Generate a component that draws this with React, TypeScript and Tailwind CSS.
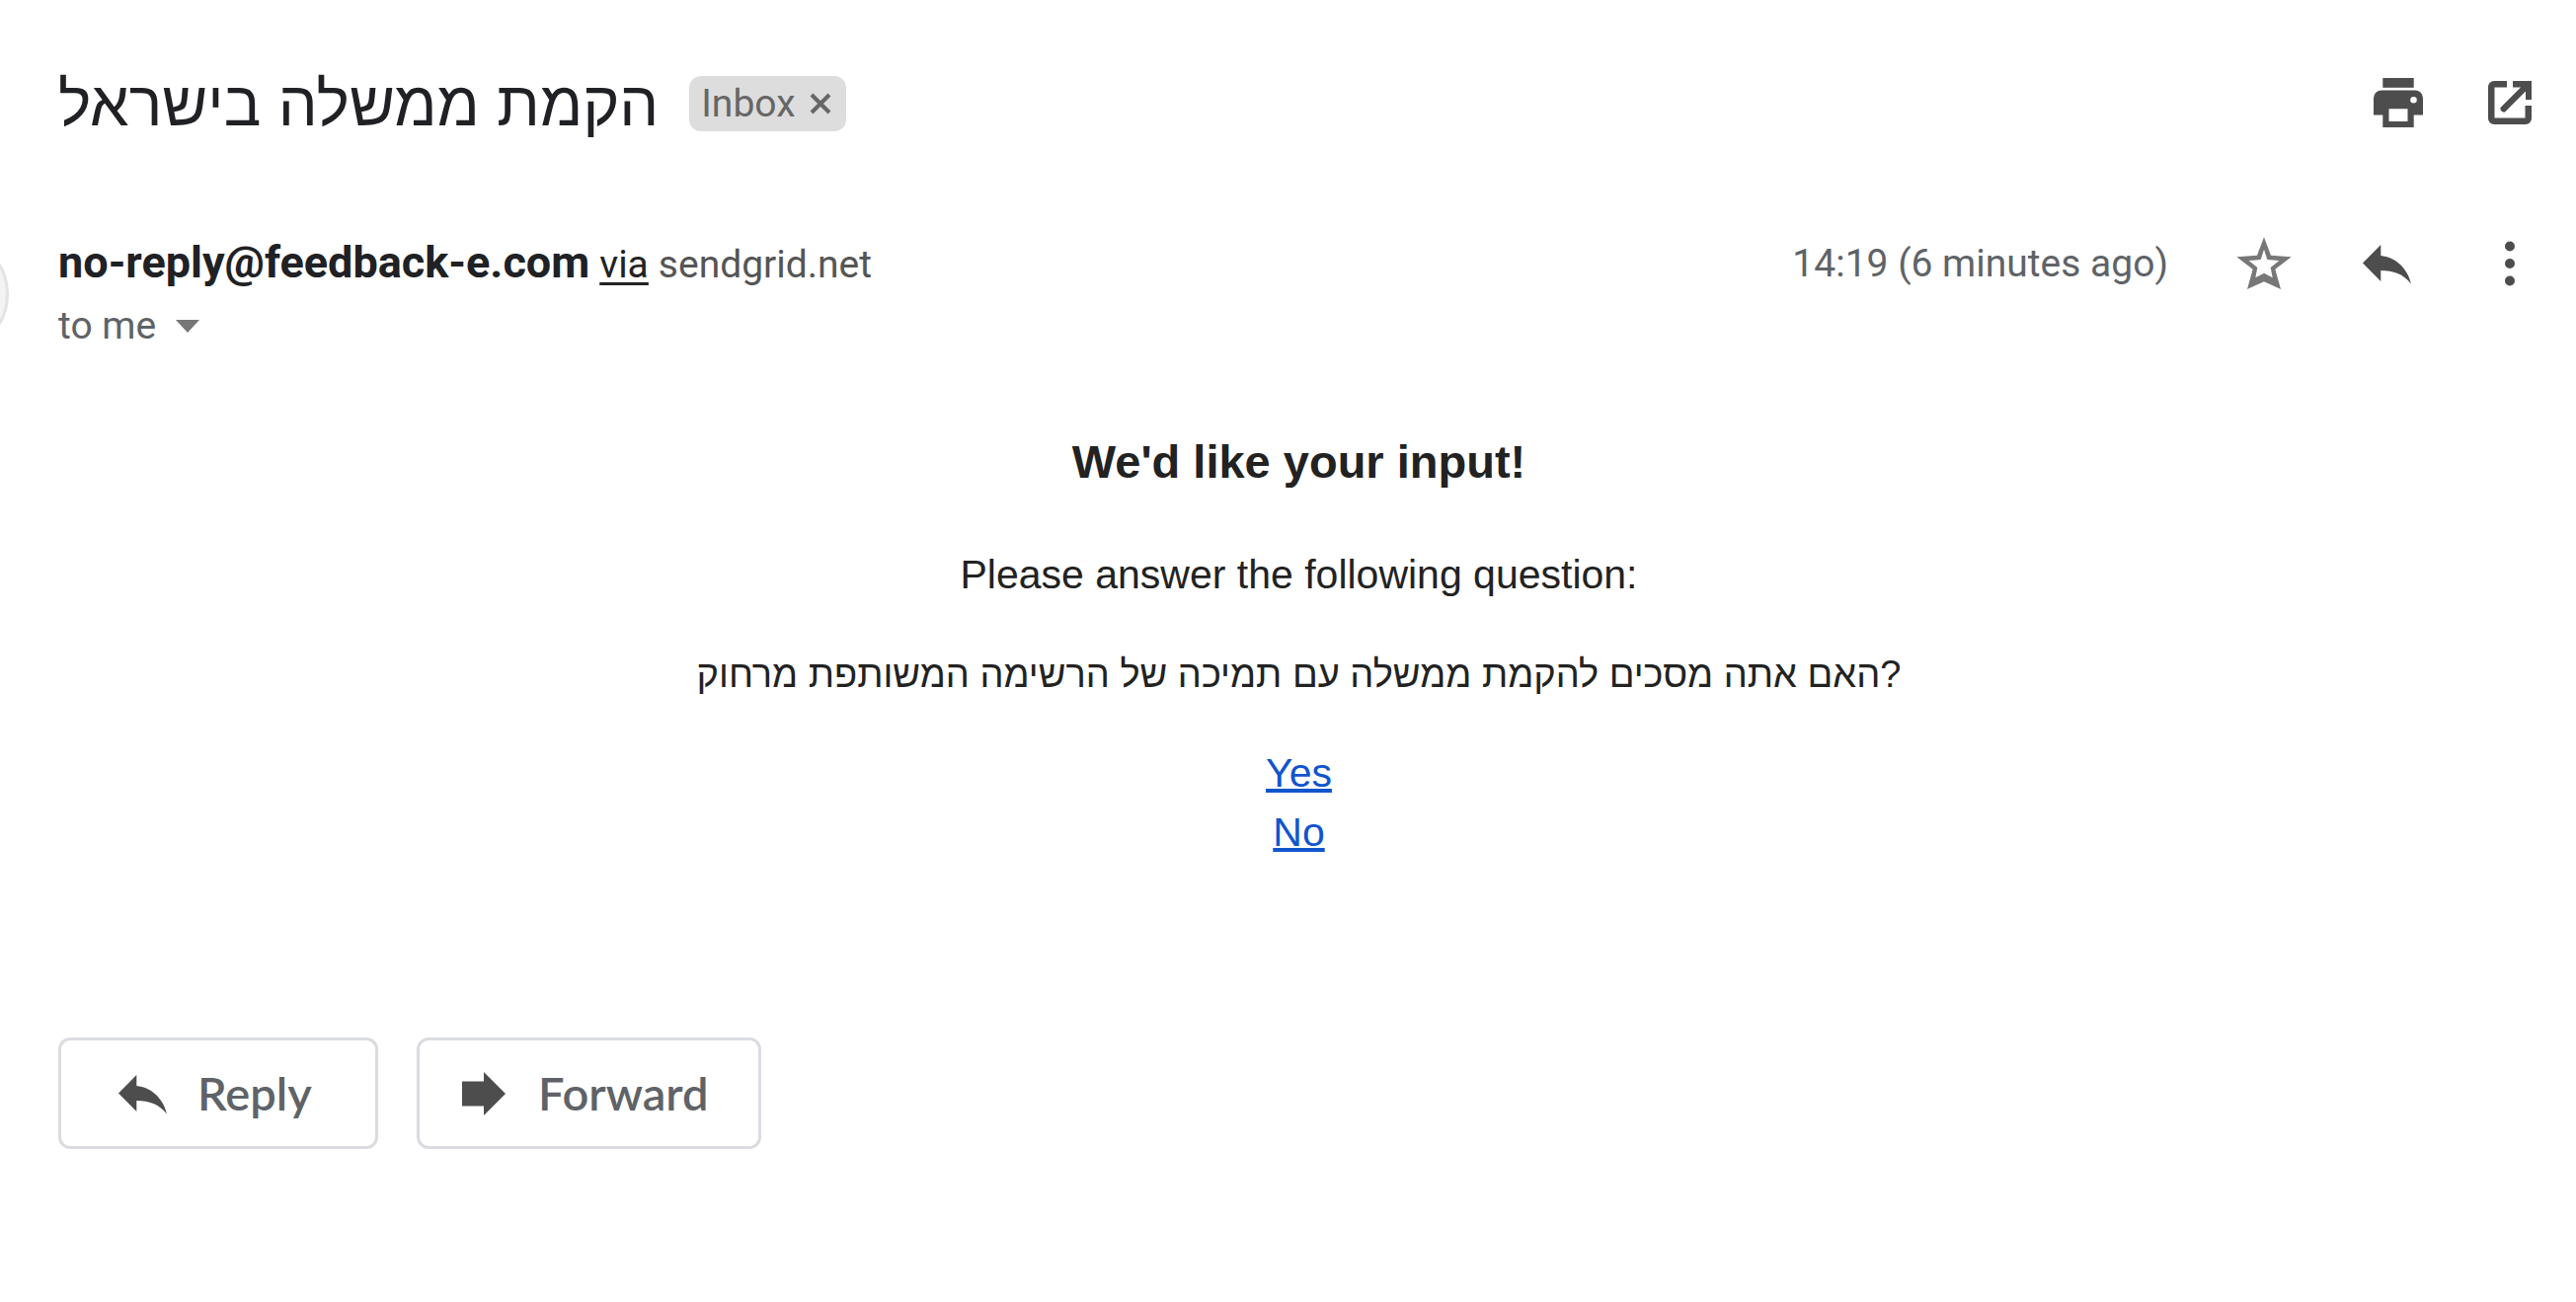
import React from "react";

const iconColor = "text-[#4d4d4d]";

function PrintIcon() {
  return (
    <svg viewBox="0 0 60 60" className="size-[60px]" fill="currentColor" aria-hidden="true">
      <path d="M14.300 4h31.400v9.800H14.300z" />
      <path
        fillRule="evenodd"
        d="M13 16.500h34a8 8 0 0 1 8 8V41.500h-9.300V54H14.300V41.500H5V24.500a8 8 0 0 1 8-8zM20.500 35.300V48h19V35.300zM45.500 23a3.300 3.300 0 1 0 0 6.600 3.300 3.300 0 1 0 0-6.600z"
      />
    </svg>
  );
}

function OpenIcon() {
  return (
    <svg viewBox="0 0 60 60" className="size-[60px]" fill="currentColor" aria-hidden="true">
      <path d="M14 7h13v6.500H14.500v31h31V32H52v13a6 6 0 0 1-6 6H14a6 6 0 0 1-6-6V13a6 6 0 0 1 6-6z" />
      <path d="M33 7h19v19h-6V17.500L25 38.500q-2 .5-3.500-1t-1-3.500L41 13.500h-8z" />
    </svg>
  );
}

function ReplyIcon() {
  return (
    <svg viewBox="0 0 60 60" className="size-[60px]" fill="currentColor" aria-hidden="true">
      <path d="M5 29.500L23.300 11v11C38 23.500 50 34 54 50.500 46 40.500 36 37 23.300 37v11z" />
    </svg>
  );
}

function ForwardIcon() {
  return (
    <svg viewBox="0 0 60 60" className="size-[60px]" fill="currentColor" aria-hidden="true">
      <path d="M8 17.500H30V8L52 30 30 52V42.500H8z" />
    </svg>
  );
}

function StarIcon() {
  return (
    <svg viewBox="39 33 180 180" className="size-[60px]" fill="currentColor" fillRule="evenodd" aria-hidden="true">
      <path d="M126 43L147 98 209 103 160 140 177 201 126 178 75 201 92 140 43 103 105 98zM126 80L116 111 80 114 106 135 100 166 126 152 152 166 146 135 172 114 136 111z" />
    </svg>
  );
}

function MoreIcon() {
  return (
    <svg viewBox="0 0 60 60" className="size-[60px]" fill="currentColor" aria-hidden="true">
      <circle cx="30" cy="12.500" r="5" />
      <circle cx="30" cy="30" r="5" />
      <circle cx="30" cy="47.500" r="5" />
    </svg>
  );
}

export default function App() {
  return (
    <main className="relative min-h-screen overflow-hidden bg-white pt-[60px] pr-[37px] pb-[150px] pl-[59px] font-['Roboto','Liberation_Sans',sans-serif] text-[#5f6368]">
      <div className="absolute top-[238px] -left-[111px] size-[120px] rounded-full border-[3px] border-[#e3e3e3] bg-[#f3f3f3]" />

      <header className="flex h-[90px] items-center justify-between">
        <div className="flex items-center gap-[31px]">
          <h1 className="font-['Liberation_Sans',sans-serif] text-[63px] leading-[90px] text-[#202124]">הקמת ממשלה בישראל</h1>
          <div className="flex h-[56px] items-center gap-[14px] rounded-[12px] bg-[#dddddd] pr-[15px] pl-[12px] text-[39px] text-[#666666]">
            <span>Inbox</span>
            <button type="button" aria-label="Remove label Inbox">
              <svg viewBox="0 0 22 22" className="size-[22px]" fill="none" stroke="currentColor" strokeWidth="4" aria-hidden="true">
                <path d="M2 2l18 18M20 2L2 20" />
              </svg>
            </button>
          </div>
        </div>
        <div className={`flex items-center gap-[53px] ${iconColor}`}>
          <button type="button" aria-label="Print"><PrintIcon /></button>
          <button type="button" aria-label="Open in new window"><OpenIcon /></button>
        </div>
      </header>

      <section className="mt-[84px] flex items-start justify-between">
        <div>
          <div className="flex h-[66px] items-baseline gap-[10px] text-[39px] leading-[64px]">
            <h2 className="text-[45px] font-bold text-[#202124]">no-reply@feedback-e.com</h2>
            <a href="#via" className="text-[#222222] underline decoration-[3px] underline-offset-[5px]">via</a>
            <span className="text-[#555555]">sendgrid.net</span>
          </div>
          <button type="button" className="flex h-[60px] items-center gap-[20px] text-[39px]">
            <span>to me</span>
            <svg viewBox="0 0 24 13" className="h-[13px] w-[24px]" fill="#777777" aria-hidden="true">
              <path d="M0 0h24L12 13z" />
            </svg>
          </button>
        </div>
        <div className={`flex h-[66px] items-center gap-[64px] ${iconColor}`}>
          <time className="mr-1 text-[39px] text-[#5f6368]">14:19 (6 minutes ago)</time>
          <button type="button" aria-label="Star" className="text-[#777777]"><StarIcon /></button>
          <button type="button" aria-label="Reply"><ReplyIcon /></button>
          <button type="button" aria-label="More"><MoreIcon /></button>
        </div>
      </section>

      <article className="mt-[78px] flex flex-col items-center text-center font-['Liberation_Sans',sans-serif] text-[41px] leading-[60px] text-[#222222]">
        <h3 className="text-[47px] font-bold">We'd like your input!</h3>
        <p className="mt-[54px]">Please answer the following question:</p>
        <p className="mt-[41px] text-[38px]" dir="ltr">האם אתה מסכים להקמת ממשלה עם תמיכה של הרשימה המשותפת מרחוק?</p>
        <a href="#yes" className="mt-[40px] text-[#1155cc] underline decoration-[4px]">Yes</a>
        <a href="#no" className="text-[#1155cc] underline decoration-[4px]">No</a>
      </article>

      <footer className="mt-[178px] flex gap-[39px] font-['Lato','Roboto',sans-serif] text-[47px] font-semibold">
        <button type="button" className="flex h-[113px] w-[324px] items-center gap-[25px] rounded-[12px] border-[3px] border-[#dadce0] pl-[53px]">
          <span className={iconColor}><ReplyIcon /></span>
          Reply
        </button>
        <button type="button" className="flex h-[113px] w-[349px] items-center gap-[25px] rounded-[12px] border-[3px] border-[#dadce0] pl-[35px]">
          <span className={iconColor}><ForwardIcon /></span>
          Forward
        </button>
      </footer>
    </main>
  );
}
